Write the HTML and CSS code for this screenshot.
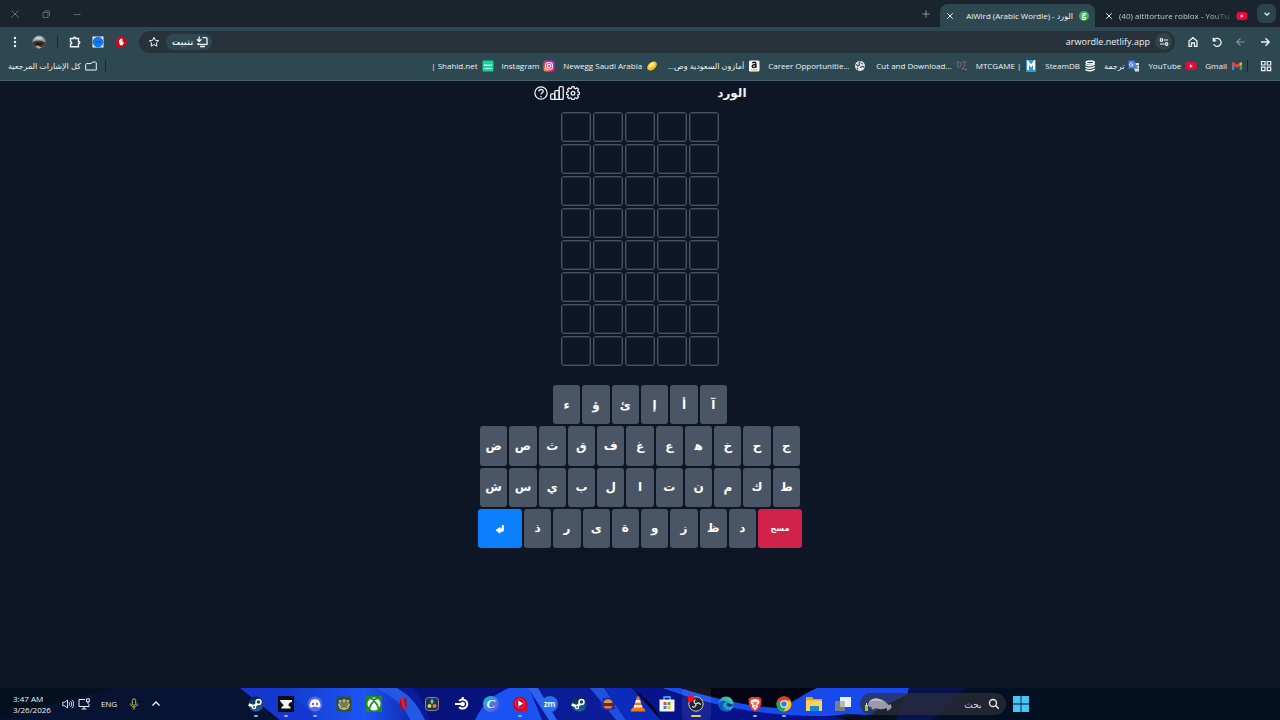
FILE: index.html
```html
<!DOCTYPE html>
<html lang="ar" dir="rtl">
<head>
<meta charset="utf-8">
<meta name="viewport" content="width=device-width, initial-scale=1">
<title>AlWird (Arabic Wordle) - الورد</title>
<link rel="stylesheet" href="styles.css">
</head>
<body>
<svg class="defs" aria-hidden="true">
  <defs>
    <linearGradient id="insta" x1="0" y1="1" x2="1" y2="0"><stop offset="0" stop-color="#ffb02e"/><stop offset=".45" stop-color="#f0246f"/><stop offset="1" stop-color="#a22be0"/></linearGradient>
    <linearGradient id="edge" x1="0" y1="1" x2="1" y2="0"><stop offset="0" stop-color="#0b63c5"/><stop offset=".5" stop-color="#22a9e0"/><stop offset="1" stop-color="#5ade6a"/></linearGradient>
    <linearGradient id="steam" x1="0" y1="0" x2="0" y2="1"><stop offset="0" stop-color="#0d1f3c"/><stop offset="1" stop-color="#1c6aa5"/></linearGradient>
    <linearGradient id="swirl" x1="0" y1="0" x2="1" y2="0"><stop offset="0" stop-color="#1238c8"/><stop offset=".6" stop-color="#1c55f4"/><stop offset="1" stop-color="#0b22a0"/></linearGradient>
    <linearGradient id="fade" x1="0" y1="0" x2="1" y2="0"><stop offset="0" stop-color="#020617"/><stop offset=".5" stop-color="#050d1c"/><stop offset="1" stop-color="#031322"/></linearGradient>
    <symbol id="i-close" viewBox="0 0 10 10"><path d="M1.5 1.5l7 7M8.5 1.5l-7 7" fill="none" stroke="currentColor" stroke-width="1.2"/></symbol>
    <symbol id="i-youtube" viewBox="0 0 12 12"><rect x=".5" y="2" width="11" height="8" rx="2.5" fill="#f0043c"/><path d="M4.8 4.200v3.600L7.800 6z" fill="#fff"/></symbol>
    <symbol id="i-steam" viewBox="0 0 16 16"><circle cx="8" cy="8" r="7.5" fill="url(#steam)"/><path d="M.7 8.5L6 10.5l3.5-3" stroke="#fff" stroke-width="2.8" fill="none"/><circle cx="10.5" cy="6" r="3.2" fill="#fff"/><circle cx="10.5" cy="6" r="1.7" fill="#18406d"/><circle cx="6" cy="11" r="2.2" fill="#fff"/><circle cx="6" cy="11" r="1" fill="#1c5c92"/></symbol>
  </defs>
</svg>

<div class="browser">
  <header class="tabstrip">
    <button class="tab-menu" aria-label="البحث في علامات التبويب"><svg class="ico s8" viewBox="0 0 10 10"><path d="M2 3.5l3 3 3-3" fill="none" stroke="currentColor" stroke-width="1.6"/></svg></button>
    <div class="tab tab-idle">
      <svg class="ico s12"><use href="#i-youtube"/></svg>
      <span class="tab-title" dir="ltr">(40) altitorture roblox - YouTub</span>
      <button class="plain" aria-label="إغلاق"><svg class="ico s8"><use href="#i-close"/></svg></button>
    </div>
    <div class="tab tab-active">
      <span class="site-badge">g</span>
      <span class="tab-title" dir="ltr">AlWird (Arabic Wordle) - الورد</span>
      <button class="plain" aria-label="إغلاق"><svg class="ico s8"><use href="#i-close"/></svg></button>
    </div>
    <button class="plain new-tab" aria-label="علامة تبويب جديدة"><svg class="ico s10" viewBox="0 0 10 10"><path d="M5 1.5v7M1.500 5h7" fill="none" stroke="currentColor"/></svg></button>
    <div class="window-controls">
      <button class="plain" aria-label="تصغير"><svg class="ico s10" viewBox="0 0 10 10"><path d="M1.500 5.500h7" stroke="currentColor" stroke-width=".8"/></svg></button>
      <button class="plain" aria-label="استعادة"><svg class="ico s10" viewBox="0 0 10 10"><path d="M2 3.500h5v5H2zM4 3V1.800h3.500a1 1 0 0 1 1 1V6.500H8" fill="none" stroke="currentColor" stroke-width=".8"/></svg></button>
      <button class="plain" aria-label="إغلاق النافذة"><svg class="ico s10" viewBox="0 0 10 10"><path d="M1.500 1.500l7 7M8.500 1.500l-7 7" fill="none" stroke="currentColor" stroke-width=".9"/></svg></button>
    </div>
  </header>

  <div class="toolbar">
    <nav class="nav-buttons">
      <button class="plain" aria-label="رجوع"><svg class="ico s12" viewBox="0 0 12 12"><path d="M2 6h8M6.500 2.300L10.200 6 6.500 9.700" fill="none" stroke="currentColor" stroke-width="1.4"/></svg></button>
      <button class="plain dim" aria-label="تقدم"><svg class="ico s12" viewBox="0 0 12 12"><path d="M10 6H2M5.500 2.300L1.800 6l3.700 3.700" fill="none" stroke="currentColor" stroke-width="1.200"/></svg></button>
      <button class="plain" aria-label="إعادة التحميل"><svg class="ico s12" viewBox="0 0 12 12"><path d="M2.300 1.800v3h3M2.500 4.600A4 4 0 1 1 2.600 8.300" fill="none" stroke="currentColor" stroke-width="1.300"/></svg></button>
      <button class="plain" aria-label="الصفحة الرئيسية"><svg class="ico s12" viewBox="0 0 12 12"><path d="M2 5L6 1.700 10 5v5.300H7.500V7h-3v3.300H2z" fill="none" stroke="currentColor" stroke-width="1.300"/></svg></button>
    </nav>
    <div class="address">
      <button class="site-info" aria-label="معلومات الموقع"><svg class="ico s10" viewBox="0 0 10 10"><g fill="none" stroke="currentColor" stroke-width="1.200"><circle cx="2.500" cy="3" r="1.300"/><path d="M5 3h4M1 7h4"/><circle cx="7.500" cy="7" r="1.300"/></g></svg></button>
      <input class="url" type="text" dir="ltr" aria-label="عنوان الموقع" value="arwordle.netlify.app">
      <button class="install"><svg class="ico s12" viewBox="0 0 12 12"><path d="M6.500 1.700H10a1 1 0 0 1 1 1v5.600H2V7M4 10.500h5M3.200 .500v5M.9 3.200l2.300 2.300 2.300-2.300" fill="none" stroke="currentColor" stroke-width="1.300"/></svg><span>تثبيت</span></button>
      <button class="plain star" aria-label="إشارة مرجعية"><svg class="ico s12" viewBox="0 0 12 12"><path d="M6 1.300l1.400 3 3.300.4-2.400 2.200.6 3.300L6 8.600l-2.900 1.600.6-3.300L1.300 4.700l3.300-.4z" fill="none" stroke="currentColor"/></svg></button>
    </div>
    <div class="extensions">
      <button class="plain" aria-label="مانع الإعلانات"><svg class="ico s12" viewBox="0 0 12 12"><path d="M4 .5h4L11.500 4v4L8 11.500H4L.5 8V4z" fill="#d4061b"/><path d="M4 6V4h.9V3h.9v-.5h.8V3h.9v3.800l.8-.8.7.6L7.500 9.300H5z" fill="#fff"/></svg></button>
      <button class="plain" aria-label="إضافة"><svg class="ico s12" viewBox="0 0 12 12"><path d="M.5.500h11v11H.5z" fill="#e8f1fb"/><circle cx="6" cy="6" r="5.300" fill="#1478f2"/><path d="M3.500 6h5" stroke="#0b4fb0"/></svg></button>
      <button class="plain" aria-label="الإضافات"><svg class="ico s12" viewBox="0 0 12 12"><path d="M1.500 2.500h3c-.2-1.600 2.200-1.600 2 0h3v3c1.600-.2 1.600 2.200 0 2v3.300h-8V8.300c1.600 0 1.600-2.600 0-2.600z" fill="none" stroke="currentColor" stroke-width="1.400"/></svg></button>
      <span class="divider"></span>
      <button class="plain" aria-label="الملف الشخصي"><svg class="ico s14" viewBox="0 0 14 14"><circle cx="7" cy="7" r="6.500" fill="#8e9aa3"/><path d="M.6 7.500C3 5 10 5 13.400 7.500A6.500 6.500 0 0 1 .6 7.500" fill="#453025"/><path d="M2 4.500h9l-2-2.800H5z" fill="#c5ced4"/><path d="M4 8h6v2H4z" fill="#18191c"/><path d="M3.500 11.500l2-1 4 2-2.500 1z" fill="#b8aa99"/></svg></button>
      <button class="plain" aria-label="القائمة"><svg class="ico s12" viewBox="0 0 12 12"><g fill="currentColor"><circle cx="6" cy="2" r="1.200"/><circle cx="6" cy="6" r="1.200"/><circle cx="6" cy="10" r="1.200"/></g></svg></button>
    </div>
  </div>

  <nav class="bookmarks">
    <button class="plain apps" aria-label="التطبيقات"><svg class="ico s12" viewBox="0 0 12 12"><path d="M1.500 1.500h3.500v3.500H1.500zM7.200 1.500h3.500v3.500H7.200zM1.500 7.200h3.500v3.500H1.500zM7.200 7.200h3.500v3.500H7.200z" fill="none" stroke="currentColor" stroke-width="1.200"/></svg></button>
    <span class="divider apps-end"></span>
    <a href="#gmail"><svg class="ico s12" viewBox="-1 -1 12 12"><path d="M0 2.500h2.300V9H0z" fill="#4285f4"/><path d="M7.700 2.500H10V9H7.700z" fill="#34a853"/><path d="M0 2c0-1 1.200-1.200 2-.6l3 2.400 3-2.400c.8-.6 2-.4 2 .6v1.500L5 7 0 3.500z" fill="#ea4335"/><path d="M7.700 2L10 1.500v2L7.700 5z" fill="#fbbc04"/></svg><bdi>Gmail</bdi></a>
    <a href="#youtube"><svg class="ico s12"><use href="#i-youtube"/></svg><bdi>YouTube</bdi></a>
    <a href="#translate"><svg class="ico s12" viewBox="0 0 12 12"><path d="M4.500 3h6.500v8.500H7z" fill="#d8dfe4"/><path d="M.5.500h6.300L9 8.500H.5z" fill="#4a7de8"/><path d="M5 4.500H3.800M5 4.500A1.700 1.700 0 1 1 4.700 3.500" fill="none" stroke="#fff" stroke-width=".8"/><path d="M7.500 5.500h3M9.200 5v.8L7.800 9M8.500 7l2 2" stroke="#50708f" stroke-width=".7" fill="none"/></svg><bdi>ترجمة</bdi></a>
    <a href="#steamdb"><svg class="ico s12" viewBox="0 0 12 12"><g fill="none" stroke="#fff" stroke-width="1.500"><ellipse cx="6.200" cy="2.500" rx="4" ry="1.400"/><path d="M1.500 4.500c2 1.700 6.500 1.700 9.300-.5M1.500 7c2 1.600 6.500 1.600 9.300-.5M1.500 9.500c2 1.800 6.500 1.800 9.300-.5"/></g></svg><bdi>SteamDB</bdi></a>
    <a href="#mtcgame"><svg class="ico s12" viewBox="0 0 12 12"><path d="M1 0h10v12H1z" fill="#3798cc"/><path d="M3 10V2l3 4 3-4v8" fill="none" stroke="#fff" stroke-width="1.900"/></svg><bdi dir="ltr">MTCGAME |</bdi></a>
    <a class="wide" href="#cut"><svg class="ico s12" viewBox="0 0 12 12"><path d="M1.500 2v5h1.500c2.500 0 2.500-5 0-5zM6 2h5M8.500 2v5" fill="none" stroke="#74636b" stroke-width="1.200"/><path d="M6 9l2-1M9 9.500h1.500" stroke="#a5a0a2"/></svg><bdi dir="ltr">Cut and Download...</bdi></a>
    <a class="wide" href="#career"><svg class="ico s12" viewBox="0 0 12 12"><circle cx="6" cy="6" r="5" fill="#e7edef"/><path d="M2 4.500l2 1.500 1.500-1L5 3l1.500-1.500M6 7.500l3-1 1.500 1M4 9.500l-1-2M7 3.500l2 .5" fill="none" stroke="#354d56" stroke-width="1.200"/></svg><bdi dir="ltr">Career Opportunitie...</bdi></a>
    <a class="wide" href="#amazon"><svg class="ico s12" viewBox="0 0 12 12"><rect x="1" y=".5" width="10.500" height="11" rx="1.500" fill="#fff"/><path d="M4.300 3.300c.5-1.500 3.600-1.500 3.600.4v3.100l.6.8M7.800 4.500C5.300 4.500 4.200 5.100 4.200 6.300c0 1.700 2.800 1.600 3.600-.1" fill="none" stroke="#111" stroke-width="1.400"/><path d="M2.800 9c2.200 1.500 4.800 1.300 6.700.2" fill="none" stroke="#f79a1c"/></svg><bdi>أمازون السعودية وص...</bdi></a>
    <a class="wide" href="#newegg"><svg class="ico s12" viewBox="0 0 12 12"><ellipse cx="6" cy="6" rx="5.500" ry="3.600" transform="rotate(-40 6 6)" fill="#f8bf28"/><ellipse cx="5.500" cy="5" rx="3.600" ry="1.700" transform="rotate(-40 5.500 5)" fill="#ffe982"/></svg><bdi dir="ltr">Newegg Saudi Arabia</bdi></a>
    <a href="#instagram"><svg class="ico s12" viewBox="0 0 12 12"><rect x=".5" y=".5" width="11" height="11" rx="2.500" fill="url(#insta)"/><g fill="none" stroke="#fff" stroke-width="1.100"><rect x="2.700" y="2.700" width="6.600" height="6.600" rx="1.800"/><circle cx="6" cy="6" r="1.600"/></g></svg><bdi>Instagram</bdi></a>
    <a href="#shahid"><svg class="ico s12" viewBox="0 0 12 12"><rect x=".5" y=".5" width="11" height="11" rx="1.500" fill="#12d795"/><path d="M2.500 4v1.500h7V4M4.800 4v1.500M7.200 4v1.500M2.500 8.500h7" fill="none" stroke="#dffff3"/></svg><bdi dir="ltr">| Shahid.net</bdi></a>
    <span class="divider all-start"></span>
    <a class="all" href="#all"><svg class="ico s12" viewBox="0 0 12 12"><path d="M.7 10V4.200l.6-.6h5L7.500 2h3l.8.700V10z" fill="none" stroke="currentColor"/></svg><bdi>كل الإشارات المرجعية</bdi></a>
  </nav>
</div>

<main class="game">
  <header class="game-header">
    <h1>الورد</h1>
    <div class="game-actions">
      <button class="plain" aria-label="الإعدادات"><svg class="ico s14" viewBox="0 0 24 24"><g fill="none" stroke="currentColor" stroke-width="2.200" stroke-linejoin="round"><path d="M10.200 1.200h3.600l.7 2.700 2 .9L19 3.300l2.500 2.500L20 8.300l.8 2 2.700.7v3l-2.700.7-.8 2 1.500 2.400-2.500 2.500-2.500-1.500-2 .9-.7 2.200h-3.600L9.500 21l-2-.9L5 21.600l-2.500-2.500L4 16.700l-.8-2-2.700-.7v-3l2.700-.7.8-2-1.500-2.500L5 3.300l2.500 1.500 2-.9z"/><circle cx="12" cy="12.300" r="3.200"/></g></svg></button>
      <button class="plain" aria-label="الإحصائيات"><svg class="ico s14" viewBox="0 0 24 24"><g fill="none" stroke="currentColor" stroke-width="2.200"><rect x="1.200" y="13.500" width="7" height="9.300" rx="1.500"/><rect x="8.200" y="8" width="7.500" height="14.800" rx="1.500"/><rect x="15.700" y="1.200" width="7" height="21.600" rx="1.500"/></g></svg></button>
      <button class="plain" aria-label="المساعدة"><svg class="ico s14" viewBox="0 0 24 24"><g fill="none" stroke="currentColor" stroke-width="2.200"><circle cx="12" cy="12" r="10.500"/><path d="M8.200 9.300c.3-4.600 7.800-4.200 7.700-.2 0 2.600-3.900 2.700-3.900 5.400M12 17v2.300"/></g></svg></button>
    </div>
  </header>

  <div class="board" role="grid" aria-label="لوحة التخمين">
    <i></i><i></i><i></i><i></i><i></i><i></i><i></i><i></i><i></i><i></i>
    <i></i><i></i><i></i><i></i><i></i><i></i><i></i><i></i><i></i><i></i>
    <i></i><i></i><i></i><i></i><i></i><i></i><i></i><i></i><i></i><i></i>
    <i></i><i></i><i></i><i></i><i></i><i></i><i></i><i></i><i></i><i></i>
  </div>

  <div class="keyboard">
    <div class="keys keys-short"><button>آ</button><button>أ</button><button>إ</button><button>ئ</button><button>ؤ</button><button>ء</button></div>
    <div class="keys"><button>ج</button><button>ح</button><button>خ</button><button>ه&zwj;</button><button>ع</button><button>غ</button><button>ف</button><button>ق</button><button>ث</button><button>ص</button><button>ض</button></div>
    <div class="keys"><button>ط</button><button>ك</button><button>م</button><button>ن</button><button>ت</button><button>ا</button><button>ل</button><button>ب</button><button>ي</button><button>س</button><button>ش</button></div>
    <div class="keys keys-last"><button class="erase">مسح</button><button>د</button><button>ظ</button><button>ز</button><button>و</button><button>ة</button><button>ى</button><button>ر</button><button>ذ</button><button class="enter" aria-label="إدخال"><svg class="ico s12" viewBox="0 0 12 12"><path d="M7.800 3H10v4.300c0 1.700-.8 2.700-2.500 2.700H6.300v2L1.500 8.300 6.300 4.800v1.800h1.500z" fill="currentColor"/></svg></button></div>
  </div>
</main>

<footer class="taskbar">
  <svg class="wallpaper" viewBox="0 0 1280 32" preserveAspectRatio="none" aria-hidden="true">
    <path d="M0 0h1280v32H0z" fill="#031020"/>
    <path d="M110 0h190v32H0z" fill="#071332"/>
    <path d="M240 0h450l50 32H280z" fill="#0a1b9c"/>
    <path d="M240 0h70l60 32H280z" fill="#1537cf"/>
    <path d="M275 0c20 8 32 20 44 32h105c-15-15-30-24-48-32z" fill="url(#swirl)"/>
    <path d="M375 0h22c16 9 22 20 28 32h-15C405 18 393 8 375 0z" fill="#2357e6"/>
    <path d="M412 0c10 9 14 20 17 32h58c4-14 10-24 22-32z" fill="#07127c"/>
    <path d="M475 32c8-17 19-26 34-32h20l13 32z" fill="#1b53f2"/>
    <path d="M528 0h14l15 32h-8z" fill="#2d63ee"/>
    <path d="M538 0h58l21 32h-60z" fill="#0a1d97"/>
    <path d="M590 0h14l22 32h-10z" fill="#1f50de"/>
    <path d="M605 0h27c11 11 20 23 29 32h-35z" fill="#0b2bbd"/>
    <path d="M632 0h370v32H661z" fill="url(#fade)"/>
    <path d="M632 0h30c38 15 85 26 145 27 20 0 28 1 40 5H661C655 18 645 10 632 0z" fill="#06138a"/>
    <path d="M662 0h18c46 15 90 22 138 22 38 0 65-12 90-22v6c-25 14-52 22-90 22-57 0-107-10-156-28z" fill="#174cf0"/>
    <path d="M690 0h135c-12 10-20 18-35 20-39 0-68-9-100-20z" fill="#020414"/>
    <path d="M775 23c20-10 30-18 42-23h93L870 27z" fill="#1749ed"/>
    <path d="M910 0h58l-35 32H895z" fill="#07134f"/>
    <path d="M965 0h60v32h-92z" fill="#031023"/>
  </svg>
  <div class="taskbar-start"></div>
  <div class="dock">
    <button class="plain start" aria-label="ابدأ"><svg class="ico s16" viewBox="0 0 16 16"><path d="M0 0h7.600v7.600H0zM8.400 0H16v7.600H8.400zM0 8.400h7.600V16H0zM8.400 8.400H16V16H8.400z" fill="#48c5f5"/></svg></button>
    <label class="search">
      <svg class="ico s12" viewBox="0 0 12 12"><g fill="none" stroke="currentColor" stroke-width="1.300"><circle cx="5" cy="5" r="3.500"/><path d="M7.500 7.500l3.300 3.300"/></g></svg>
      <input type="text" placeholder="بحث" aria-label="بحث">
      <svg class="ico manatee" viewBox="0 0 28 16"><path d="M4 9C5 3 11 1 16 3c5 1 7 5 9 6l2-1 .5 4-4 3-1-3c-5 2-8 1-11 0-1 2-5 2-4-1-2 0-4-1-3.500-2z" fill="#9d99a6"/><path d="M5 6c4-5 11-4 15 1-5-3-10-3-15-1z" fill="#cbc6cc"/><path d="M1 9h3v6H1z" fill="#99c927"/><path d="M2 7h1v3H2z" fill="#e9ee72"/></svg>
    </label>
    <div class="apps-row">
      <button aria-label="سطح المكتب"><svg class="ico s16" viewBox="0 0 16 16"><path d="M5 1h11v10H5z" fill="#eef1f4"/><path d="M0 5h10v10H0z" fill="#777f87"/><path d="M5 5h5v6H5z" fill="#b6bbc0"/></svg></button>
      <button aria-label="الملفات"><svg class="ico s16" viewBox="0 0 16 16"><path d="M0 1h6l1.500 2H16v12H0z" fill="#e7a71c"/><path d="M0 4.500h16V15H0z" fill="#ffd25a"/><path d="M4 10h9v5H4z" fill="#168ad2"/></svg></button>
      <button class="open" aria-label="Chrome"><svg class="ico s16" viewBox="0 0 16 16"><circle cx="8" cy="8" r="7.500" fill="#fbc116"/><path d="M8 8L1.300 4.200A7.700 7.700 0 0 1 14.700 4.500H8z" fill="#e33b2e"/><path d="M1.400 4.300A7.600 7.600 0 0 0 7.500 15.500L10.500 10 8 8z" fill="#22a550"/><circle cx="8" cy="8" r="3.700" fill="#fff"/><circle cx="8" cy="8" r="2.800" fill="#3578e5"/></svg></button>
      <button class="open" aria-label="Brave"><svg class="ico s16" viewBox="0 0 16 16"><path d="M4 1h8l2.500 2-.5 6-2.500 4L8 16l-3.500-3L2 9l-.5-6z" fill="#f23a23"/><path d="M4 4l4-1 4 1 .5 3-2 2 .5 2-3 3-3-3 .5-2-2-2z" fill="#fff"/><path d="M5.500 6l2 .5v2L6 8M10.500 6l-2 .5v2L10 8M6.500 11.500L8 10.500l1.500 1" fill="none" stroke="#f23a23" stroke-width=".9"/></svg></button>
      <button aria-label="Edge"><svg class="ico s16" viewBox="0 0 16 16"><circle cx="8" cy="8" r="7.600" fill="url(#edge)"/><path d="M.5 7.500C2 4 8 4 8.500 6.500 5 6 4 10 6 12.500c2 2.200 5.500 2 8.200.3-2 3-7 3.500-10 1.200C1.500 12 .2 10 .5 7.500z" fill="#1459b5"/><path d="M9 9.700c-1.200-.6.6-1.700 0-3.200 1.800 0 2.600 2 6.500 2-.8 2.500-5 2.900-6.500 1.200z" fill="#0a2a78"/></svg></button>
      <button class="recording" aria-label="OBS"><svg class="ico s16" viewBox="0 0 16 16"><circle cx="8" cy="8" r="7.200" fill="#20242a" stroke="#c8cacc"/><path d="M8 8c-2.500-1-2.500-3-.5-4.500M8 8c2-1.800 4.500-1 4.500 1M8 8c0 2.500-2 4-4 2.500" fill="none" stroke="#d4d4d4" stroke-width="1.300"/><circle cx="2.500" cy="2.500" r="3.500" fill="#fb0b18"/></svg></button>
      <button aria-label="المتجر"><svg class="ico s16" viewBox="0 0 16 16"><path d="M5 4V1h6v3" fill="none" stroke="#4dc7f3" stroke-width="1.300"/><path d="M.5 3.500h15v11q0 1-1 1h-13q-1 0-1-1z" fill="#f3f6fa"/><path d="M4.500 6h3v3h-3z" fill="#e74838"/><path d="M8.500 6h3v3h-3z" fill="#53a73a"/><path d="M4.500 10h3v3h-3z" fill="#198fe5"/><path d="M8.500 10h3v3h-3z" fill="#f5b91d"/></svg></button>
      <button aria-label="VLC"><svg class="ico s16" viewBox="0 0 16 16"><path d="M2 12h12l1.500 3.500H.5z" fill="#f07b10"/><path d="M7 .5h2L13 13H3z" fill="#ee7814"/><path d="M6 4h4l.9 2.700H5.100zM4.300 9h7.400l.8 2.400h-9z" fill="#f9eee3"/></svg></button>
      <button aria-label="تطبيق"><svg class="ico s16" viewBox="0 0 16 16"><path d="M8 1l2 1.500 3-.5.5 3L16 7l-1.500 3 .5 3-4 .5-3 1.500-3-1.500-4-.5.5-3L0 7l2.500-2L3 2l3 .5z" fill="#172eaa"/><path d="M3.500 7c0-5 9-5 9 0z" fill="#e69138"/><path d="M3 8.200h10" stroke="#692b16" stroke-width="2"/><path d="M3.500 10h9L11 12.500H5z" fill="#ed7345"/></svg></button>
      <button aria-label="Steam"><svg class="ico s16"><use href="#i-steam"/></svg></button>
      <button aria-label="Zoom"><span class="round-app">zm</span></button>
      <button class="open" aria-label="YouTube Music"><svg class="ico s16" viewBox="0 0 16 16"><circle cx="8" cy="8" r="7.500" fill="#c20b32"/><path d="M9 9h7v6H9z" fill="#d80a38"/><circle cx="8" cy="7.500" r="4.500" fill="none" stroke="#f05673" stroke-width=".7"/><path d="M6.300 4.500v6l5-3z" fill="#fff"/></svg></button>
      <button aria-label="Canva"><span class="round-app canva">C</span></button>
      <button aria-label="SteelSeries"><svg class="ico s16" viewBox="0 0 16 16"><path d="M5.200 5a4.600 4.600 0 1 1 0 6" fill="none" stroke="#fff" stroke-width="2"/><circle cx="8.700" cy="8" r="2.200" fill="#fff"/><path d="M1 7h7v2H1zM7.700 1h2v3h-2z" fill="#fff"/></svg></button>
      <button aria-label="DaVinci Resolve"><svg class="ico s14" viewBox="0 0 14 14"><rect x=".5" y=".5" width="13" height="13" rx="3" fill="#273241" stroke="#818a96"/><ellipse cx="7" cy="4.500" rx="1.500" ry="2.200" fill="#55c5e4"/><circle cx="4.500" cy="9" r="2" fill="#c2dc66"/><circle cx="9.500" cy="9" r="2" fill="#ed765b"/></svg></button>
      <button aria-label="Netflix"><svg class="ico s14" viewBox="0 0 14 14"><path d="M5 1v12M9.500 1v12" stroke="#b40919" stroke-width="2.200"/><path d="M3.900 1H6l4.600 12H8.500z" fill="#ef1b2c"/></svg></button>
      <button aria-label="Xbox"><svg class="ico s16" viewBox="0 0 16 16"><path d="M0 0h16v16H0z" fill="#218c22"/><circle cx="8" cy="8" r="6.500" fill="#fff"/><path d="M4 2.800C6 2 7 3.500 8 4 9 3.500 10 2 12 2.800M3.300 13C4 9 6.500 6.500 8 5.200 9.500 6.500 12 9 12.700 13" fill="none" stroke="#218c22" stroke-width="1.600"/></svg></button>
      <button aria-label="تطبيق"><svg class="ico s16" viewBox="0 0 16 16"><rect x=".5" y=".5" width="15" height="15" rx="2" fill="#344e38"/><path d="M3 4h3l2-1 2 1h3v3l1 2-2 4-4 1-4-1-2-4 1-2z" fill="#bcb87e"/><path d="M3.500 7h9M4 9h8M5 12c2-2 4-2 6 0M5 5h2M9 5h2" fill="none" stroke="#31412a"/></svg></button>
      <button class="open" aria-label="Discord"><svg class="ico s16" viewBox="0 0 16 16"><circle cx="8" cy="8" r="7.500" fill="#5967ea"/><path d="M4.500 4c2-.9 5-.9 7 0 1.500 2.500 2 4.500 2 6.500l-2.500 1.300-.8-1H5.800l-.8 1-2.500-1.300C2.500 8.500 3 6.500 4.500 4z" fill="#fff"/><circle cx="6" cy="8" r="1.200" fill="#5967ea"/><circle cx="10" cy="8" r="1.200" fill="#5967ea"/></svg></button>
      <button class="open" aria-label="تطبيق"><svg class="ico s16" viewBox="0 0 16 16"><path d="M0 0h16v16H0z" fill="#0c0d10"/><path d="M2 4h12v2c-2 .2-3.500 1.500-3.500 3 0 1 1 1.500 2 2v1.500h-9V11c1-.5 2-1 2-2C5 7.500 3 7.500 2 4z" fill="#f5f5f5"/></svg></button>
      <button class="open" aria-label="Steam"><svg class="ico s16"><use href="#i-steam"/></svg></button>
    </div>
  </div>
  <div class="tray">
    <button class="plain" aria-label="الرموز المخفية"><svg class="ico s10" viewBox="0 0 10 10"><path d="M1.500 6.500L5 3l3.500 3.500" fill="none" stroke="currentColor" stroke-width="1.300"/></svg></button>
    <button class="plain mic" aria-label="الميكروفون"><svg class="ico s12" viewBox="0 0 12 12"><rect x="4.300" y=".8" width="3.400" height="6.500" rx="1.700" fill="none" stroke="currentColor"/><path d="M2.500 5.500c0 4.500 7 4.500 7 0M6 9v2.500" fill="none" stroke="currentColor"/></svg></button>
    <button class="plain" dir="ltr">ENG</button>
    <div class="status">
      <svg class="ico s12" viewBox="0 0 12 12"><path d="M7 1.500H1v7h10V6M3.500 11h5M6 8.500V11M8.500.8h2.800v3H8.500zM10 3.800V6" fill="none" stroke="currentColor"/></svg>
      <svg class="ico s12" viewBox="0 0 12 12"><path d="M.8 4.200h2L5.500 2v8L2.800 7.800h-2zM7 4.300c1 1 1 2.400 0 3.400M8.500 3c1.700 1.600 1.700 4.400 0 6M10 1.800c2.300 2.300 2.300 6.100 0 8.400" fill="none" stroke="currentColor" stroke-width=".9"/></svg>
    </div>
    <div class="clock" dir="ltr"><time>3:47 AM</time><time>3/26/2026</time></div>
  </div>
</footer>
</body>
</html>
```

FILE: styles.css
```css
* { box-sizing: border-box; }

body {
  margin: 0;
  min-height: 100vh;
  display: flex;
  flex-direction: column;
  background: #0e1525;
  color: #eef3f5;
  font-family: "Open Sans", "DejaVu Sans", sans-serif;
  font-size: 8px;
  line-height: 12px;
}

button, input { font: inherit; color: inherit; }
button { border: 0; padding: 0; cursor: pointer; }
h1 { margin: 0; }

.defs { position: absolute; width: 0; height: 0; }
.ico { display: block; flex: none; }
.s8 { width: 8px; height: 8px; }
.s10 { width: 10px; height: 10px; }
.s12 { width: 12px; height: 12px; }
.s14 { width: 14px; height: 14px; }
.s16 { width: 16px; height: 16px; }

.plain {
  display: flex;
  align-items: center;
  justify-content: center;
  background: none;
}
.dim { color: #81949a; }
.divider { width: 1px; height: 12px; background: #142a33; }

/* Browser frame */
.browser { background: #2e4851; border-bottom: 1px solid #48616a; }

.tabstrip {
  display: flex;
  align-items: center;
  height: 27px;
  padding-inline: 4px 10px;
  background: #19242c;
}
.tab-menu {
  display: grid;
  place-items: center;
  width: 19px;
  height: 19px;
  border-radius: 6px;
  background: #2d444e;
}
.tab {
  display: flex;
  align-items: center;
  height: 23px;
  align-self: flex-end;
}
.tab-idle {
  gap: 6px;
  width: 162px;
  padding-inline: 9px 10px;
}
.tab-active {
  gap: 6px;
  width: 155px;
  padding-inline: 6px;
  border-radius: 8px 8px 0 0;
  background: #2e4851;
}
.tab-title { flex: 1; overflow: hidden; white-space: nowrap; }
.tab-idle .tab-title {
  color: #c3cdd1;
  mask-image: linear-gradient(to right, #000 80%, #0004);
}
.tab-active .tab-title { text-align: right; }
.site-badge {
  width: 10px;
  height: 10px;
  border-radius: 50%;
  background: #4fae50;
  font-weight: 700;
  line-height: 8px;
  text-align: center;
}
.new-tab { margin-inline-start: 9px; color: #8a969b; }
.window-controls {
  display: flex;
  gap: 21px;
  margin-inline-start: auto;
  color: #6d797f;
}

.toolbar {
  display: flex;
  align-items: center;
  height: 29px;
  padding-inline: 9px;
}
.nav-buttons { display: flex; gap: 12px; margin-inline-end: 12px; }
.address {
  flex: 1;
  display: flex;
  align-items: center;
  height: 22px;
  padding-inline: 3px 9px;
  border-radius: 11px;
  background: #27323b;
}
.site-info {
  display: grid;
  place-items: center;
  width: 17px;
  height: 17px;
  border-radius: 50%;
  background: #33434c;
}
.url {
  flex: 1;
  min-width: 0;
  height: 16px;
  padding: 0 5px;
  border: 0;
  outline: 0;
  background: none;
  font-size: 9px;
  text-align: right;
}
.install {
  display: flex;
  align-items: center;
  gap: 3px;
  height: 16px;
  padding-inline: 4px 6px;
  border-radius: 8px;
  background: #2e4851;
  font-weight: 700;
}
.star { margin-inline-start: 6px; }
.extensions {
  display: flex;
  align-items: center;
  gap: 11px;
  margin-inline-start: 12px;
}

.bookmarks {
  display: flex;
  align-items: center;
  gap: 8px;
  height: 24px;
  padding-inline: 8px;
  padding-bottom: 4px;
  white-space: nowrap;
}
.bookmarks a {
  display: flex;
  align-items: center;
  gap: 4px;
  color: inherit;
  text-decoration: none;
}
.bookmarks .wide { min-width: 94px; }
.bookmarks .apps { margin-inline-end: 4px; }
.bookmarks .apps-end { margin-inline-end: -4px; }
.bookmarks .all-start { margin-inline-start: auto; }

/* Game */
.game {
  flex: 1;
  display: flex;
  flex-direction: column;
  align-items: center;
  padding: 4px 8px;
}
.game-header {
  display: flex;
  align-items: center;
  justify-content: space-between;
  width: 100%;
  max-width: 213px;
  height: 16px;
}
.game-header h1 { font-size: 12px; line-height: 16px; }
.game-actions { display: flex; gap: 2px; }

.board {
  display: grid;
  grid-template-columns: repeat(5, 30px);
  grid-auto-rows: 30px;
  gap: 2px;
  margin-top: 11px;
}
.board i {
  border: 1px solid #475262;
  border-radius: 3px;
  box-shadow: inset 0 0 0 1px #222c3b;
}

.keyboard {
  display: grid;
  grid-auto-rows: 1fr;
  justify-items: center;
  gap: 2px;
  width: 100%;
  max-width: 324px;
  min-height: 163px;
  margin-top: 19px;
}
.keys {
  display: grid;
  grid-template-columns: repeat(11, 1fr);
  gap: 2px;
  width: 320px;
}
.keys-short { grid-template-columns: repeat(6, 1fr); width: 174px; }
.keys-last { grid-template-columns: 44px repeat(8, 1fr) 44px; width: 324px; }
.keys button {
  display: grid;
  place-items: center;
  border-radius: 3px;
  background: #4a5666;
  color: #fff;
  font-size: 12px;
  font-weight: 700;
}
.keys .erase { background: #d1234a; font-size: 8px; }
.keys .enter { background: #0c80fc; }

/* Taskbar */
.taskbar {
  position: relative;
  display: grid;
  grid-template-columns: 1fr auto 1fr;
  height: 32px;
}
.wallpaper { position: absolute; inset: 0; width: 100%; height: 100%; }
.dock {
  position: relative;
  display: flex;
  align-items: center;
  padding-inline-start: 10px;
}
.search {
  display: flex;
  align-items: center;
  gap: 6px;
  width: 146px;
  height: 22px;
  margin-inline: 7px 2px;
  padding-inline: 6px 4px;
  border-radius: 11px;
  background: #303039aa;
}
.search input {
  flex: 1;
  min-width: 0;
  height: 16px;
  padding: 0;
  border: 0;
  outline: 0;
  background: none;
  font-size: 9px;
}
.search input::placeholder { color: #d8dbe0; opacity: 1; }
.manatee { width: 28px; height: 16px; }
.apps-row {
  display: grid;
  grid-template-columns: repeat(21, 1fr);
  width: 616px;
  height: 32px;
}
.apps-row button {
  display: grid;
  place-items: center;
  background: none;
  position: relative;
}
.apps-row .open::after,
.apps-row .recording::after {
  content: "";
  position: absolute;
  bottom: 3px;
  left: 50%;
  width: 4px;
  height: 2px;
  margin-left: -2px;
  border-radius: 1px;
  background: #a4adc4;
}
.apps-row .recording { background: #ffffff14; border-radius: 3px; }
.apps-row .recording::after { width: 10px; margin-left: -5px; background: #f0cb57; }
.round-app {
  width: 16px;
  height: 16px;
  border-radius: 50%;
  background: #236df2;
  font-size: 8px;
  font-weight: 700;
  line-height: 15px;
}
.round-app.canva {
  background: linear-gradient(135deg, #12cbd5, #7938e8);
  font-family: "Liberation Serif", serif;
  font-size: 13px;
  font-style: italic;
}
.tray {
  position: relative;
  display: flex;
  align-items: center;
  justify-content: flex-end;
  gap: 11px;
  padding-inline-end: 13px;
}
.mic { color: #b4bb43; }
.status { display: flex; gap: 4px; }
.clock { display: grid; line-height: 11px; }
```
